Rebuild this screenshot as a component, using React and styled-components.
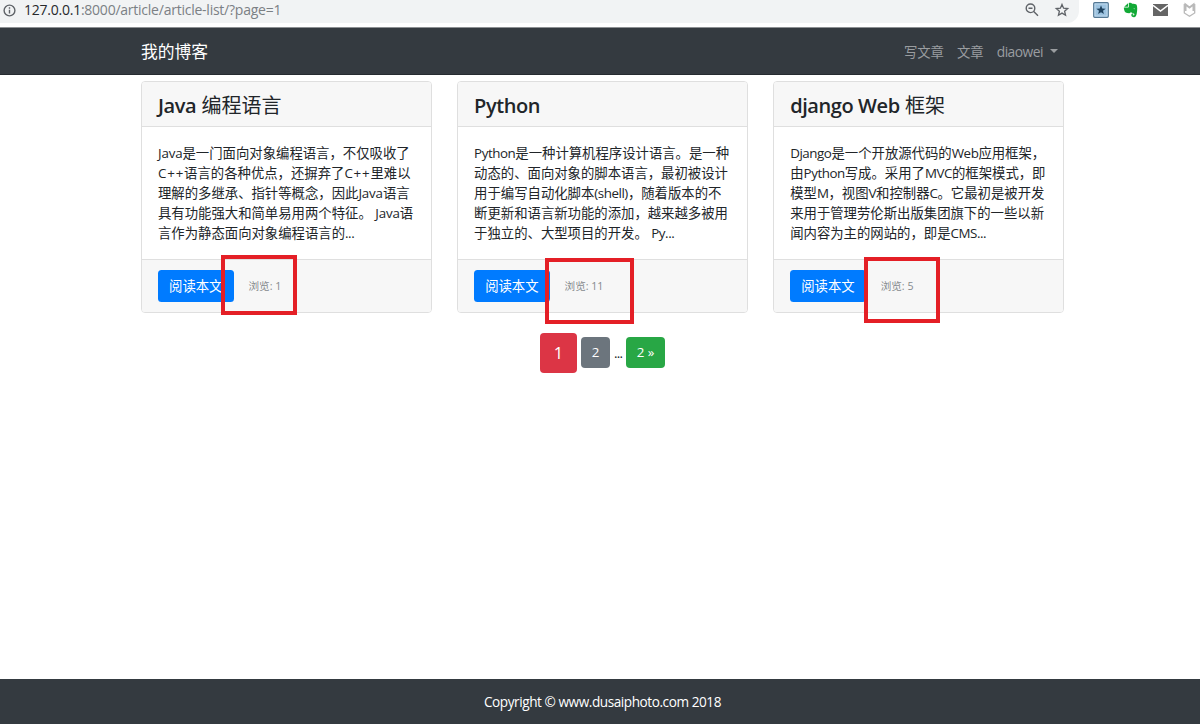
import React from "react";
import styled, { createGlobalStyle } from "styled-components";

const GlobalStyle = createGlobalStyle`
  *, *::before, *::after { box-sizing: border-box; }
  body {
    margin: 0;
    background: #fff;
    color: #212529;
    font-family: "Open Sans", "Noto Sans CJK SC", sans-serif;
    font-size: 13.36px;
    line-height: 20px;
    overflow: hidden;
  }
  h4, p { margin: 0; }
`;

const Page = styled.div`
  height: 724px;
  display: flex;
  flex-direction: column;
`;

const BrowserBar = styled.div`
  height: 28px;
  flex: none;
  display: flex;
  align-items: flex-start;
  border-bottom: 1px solid #8d9093;
`;

const AddressBar = styled.div`
  width: 1079px;
  height: 23px;
  padding: 0 9px 3px 2px;
  display: flex;
  align-items: center;
  background: #f1f3f4;
  border-radius: 0 0 12px 0;
  svg { display: block; flex: none; }
`;

const Url = styled.div`
  flex: 1;
  padding-left: 7px;
  font-size: 14px;
  letter-spacing: -0.24px;
  color: #7b8084;
  white-space: nowrap;
  b { font-weight: 400; color: #27292c; }
`;

const AddressIcons = styled.div`
  display: flex;
  gap: 14px;
`;

const Extensions = styled.div`
  display: flex;
  align-items: center;
  gap: 14px;
  height: 20px;
  padding-left: 14px;
  svg { display: block; flex: none; }
`;

const Navbar = styled.nav`
  height: 47px;
  flex: none;
  padding: 1px 142px 0 141px;
  display: flex;
  align-items: center;
  justify-content: space-between;
  background: #343a40;
  border-bottom: 1px solid #262b30;
`;

const Brand = styled.div`
  font-size: 16.8px;
  line-height: 24px;
  color: #fff;
`;

const NavLinks = styled.div`
  display: flex;
  align-items: center;
  gap: 13px;
  color: #9a9da0;
`;

const UserMenu = styled.div`
  display: flex;
  align-items: center;
  gap: 7px;
  font-size: 13.8px;
  &::after {
    content: "";
    border: 4px solid transparent;
    border-top-color: currentColor;
    border-bottom: 0;
    margin-bottom: 2px;
  }
`;

const LatinRun = styled.span`
  letter-spacing: ${(p) => p.$track}px;
`;

const Main = styled.main`
  flex: 1;
  padding: 6px 136px 0 141px;
`;

const Cards = styled.div`
  display: grid;
  grid-template-columns: repeat(3, 291px);
  column-gap: 25.1px;
`;

const Card = styled.article`
  position: relative;
  height: 232px;
  display: flex;
  flex-direction: column;
  border: 1px solid #dfdfdf;
  border-radius: 4px;
  background: #fff;
`;

const CardHeader = styled.h4`
  height: 45px;
  padding: 0 16px;
  font-size: 20px;
  font-weight: 400;
  line-height: 47px;
  white-space: nowrap;
  background: #f7f7f7;
  border-bottom: 1px solid #dfdfdf;
  border-radius: 3px 3px 0 0;
  ${LatinRun} { font-weight: 600; }
`;

const CardBody = styled.p`
  flex: 1;
  padding: 16px 16px 0;
  white-space: nowrap;
`;

const Line = styled.span`
  display: block;
`;

const CardFooter = styled.div`
  height: 53px;
  padding: 0 16px;
  display: flex;
  align-items: center;
  gap: 15px;
  background: #f7f7f7;
  border-top: 1px solid #dfdfdf;
  border-radius: 0 0 3px 3px;
`;

const ReadButton = styled.button`
  width: 75.5px;
  height: 32px;
  padding: 0;
  border: 0;
  border-radius: 3.5px;
  background: #007bff;
  color: #fff;
  font: inherit;
`;

const Views = styled.small`
  font-size: 10.6px;
  color: #868a8e;
`;

const Highlight = styled.div`
  position: absolute;
  left: ${(p) => p.$x}px;
  top: ${(p) => p.$y}px;
  width: ${(p) => p.$w}px;
  height: ${(p) => p.$h}px;
  border: 4px solid #e41f26;
`;

const Pagination = styled.div`
  margin: 20px 0 0 399px;
  display: flex;
  align-items: center;
  gap: 4px;
`;

const PageButton = styled.button`
  width: ${(p) => p.$w}px;
  height: ${(p) => (p.$large ? 40 : 31)}px;
  margin-bottom: ${(p) => (p.$large ? 0 : 1)}px;
  padding: 0 0 1px;
  border: 0;
  border-radius: 4px;
  background: ${(p) => p.$color};
  color: #fff;
  font-family: inherit;
  font-size: ${(p) => (p.$large ? 16.6 : 13.33)}px;
`;

const Ellipsis = styled.span`
  width: 8px;
  letter-spacing: -0.7px;
`;

const Footer = styled.footer`
  height: 45px;
  flex: none;
  padding: 1px 0 0 5px;
  display: flex;
  align-items: center;
  justify-content: center;
  background: #343a40;
  color: #fff;
  font-size: 13.6px;
`;

const wideRuns = { "C++": 0.8, Java: -0.15 };

function Mixed({ text, track }) {
  return text.split(/([\x21-\x7e©]+(?: [\x21-\x7e©]+)*)/).map((part, i) =>
    i % 2 ? (
      <LatinRun key={i} $track={track ?? wideRuns[part] ?? -0.45}>{part}</LatinRun>
    ) : part
  );
}

const articles = [
  {
    title: "Java 编程语言",
    lines: [
      "Java是一门面向对象编程语言，不仅吸收了",
      "C++语言的各种优点，还摒弃了C++里难以",
      "理解的多继承、指针等概念，因此Java语言",
      "具有功能强大和简单易用两个特征。 Java语",
      "言作为静态面向对象编程语言的...",
    ],
    views: "浏览: 1",
    box: { $x: 79, $y: 173, $w: 76, $h: 60 },
  },
  {
    title: "Python",
    lines: [
      "Python是一种计算机程序设计语言。是一种",
      "动态的、面向对象的脚本语言，最初被设计",
      "用于编写自动化脚本(shell)，随着版本的不",
      "断更新和语言新功能的添加，越来越多被用",
      "于独立的、大型项目的开发。 Py...",
    ],
    views: "浏览: 11",
    box: { $x: 87, $y: 176, $w: 89, $h: 66 },
  },
  {
    title: "django Web 框架",
    lines: [
      "Django是一个开放源代码的Web应用框架，",
      "由Python写成。采用了MVC的框架模式，即",
      "模型M，视图V和控制器C。它最初是被开发",
      "来用于管理劳伦斯出版集团旗下的一些以新",
      "闻内容为主的网站的，即是CMS...",
    ],
    views: "浏览: 5",
    box: { $x: 90, $y: 175, $w: 76, $h: 66 },
  },
];

const InfoIcon = () => (
  <svg width="15" height="15" viewBox="0 0 15 15" fill="none" stroke="#5f6368" strokeWidth="1.4">
    <circle cx="7.5" cy="7.5" r="5.4" />
    <path d="M7.5 6.8v3.6M7.5 4.3v1.4" />
  </svg>
);

const ZoomOutIcon = () => (
  <svg width="16" height="16" viewBox="0 0 16 16" fill="none" stroke="#5f6368" strokeWidth="1.4">
    <circle cx="6.5" cy="6.3" r="4.3" />
    <path d="M4.5 6.3h4M9.7 9.5l4.3 4.3" />
  </svg>
);

const StarIcon = () => (
  <svg width="16" height="16" viewBox="0 0 16 16" fill="none" stroke="#5f6368" strokeWidth="1.3">
    <path d="M8 2.4l1.6 3.8 4.1.35-3.1 2.7.95 4L8 11.1l-3.55 2.15.95-4-3.1-2.7 4.1-.35z" />
  </svg>
);

const BookmarkExtension = () => (
  <svg width="16" height="16" viewBox="0 0 16 16">
    <rect x=".7" y=".7" width="14.6" height="14.6" rx="1" fill="#9dc3e0" stroke="#557893" strokeWidth="1.2" />
    <rect x="2" y="2" width="12" height="12" fill="none" stroke="#c5dded" strokeWidth=".8" />
    <path d="M8 3.3l1.25 3.2 3.4.2-2.65 2.1.9 3.3L8 10.3l-2.9 1.8.9-3.3-2.65-2.1 3.4-.2z" fill="#20435f" />
  </svg>
);

const ElephantExtension = () => (
  <svg width="16" height="16" viewBox="0 0 16 16" fill="#12a936">
    <path d="M5 1.2L1.2 4.8h3.3q.5 0 .5-.5z" />
    <path d="M5.8 1c1.5-.5 2.7-.2 3.3.7 1.7 0 3.8.2 4.5 1 .8 2 .8 5.3.2 8.5-.3 2.3-1.1 4-2.8 4-1.8 0-2.7-.8-2.7-2.2 0-1.2.8-1.9 2-1.8v1.2c-.6 0-.8.3-.7.7.2.5 1.8.4 1.8-.6 0-1.3-1.2-1.6-2.7-1.8-.4 0-.6-.5-.8-.9-.2 1-.7 1.4-1.7 1.4C3 11.2 1.7 10.5 1.2 8 .9 6.8.8 6 .9 5.4h4c.7 0 .9-.4.9-1z" />
    <path d="M10.4 6.8c.8-.5 1.6-.2 1.7.5z" fill="#fff" />
  </svg>
);

const MailExtension = () => (
  <svg width="15" height="16" viewBox="0 0 15 16">
    <path d="M0 2h15v12H0z" fill="#656565" />
    <path d="M0 3.3L7.5 9L15 3.3" fill="none" stroke="#fff" strokeWidth="1.5" />
  </svg>
);

const ShieldExtension = () => (
  <svg width="15" height="16" viewBox="0 0 15 16" fill="none" stroke="#b9b9b9">
    <path d="M3.5 9V2.5L7.5 5.5l4-3V9" strokeWidth="2" />
    <path d="M2.300 2v9l5.200 3.200 5.200-3.200V2" strokeWidth="1.300" />
  </svg>
);

export default function App() {
  return (
    <Page>
      <GlobalStyle />
      <BrowserBar>
        <AddressBar>
          <InfoIcon />
          <Url><b>127.0.0.1</b>:8000/article/article-list/?page=1</Url>
          <AddressIcons>
            <ZoomOutIcon />
            <StarIcon />
          </AddressIcons>
        </AddressBar>
        <Extensions>
          <BookmarkExtension />
          <ElephantExtension />
          <MailExtension />
          <ShieldExtension />
        </Extensions>
      </BrowserBar>
      <Navbar>
        <Brand>我的博客</Brand>
        <NavLinks>
          <span>写文章</span>
          <span>文章</span>
          <UserMenu><Mixed text="diaowei" track={-0.5} /></UserMenu>
        </NavLinks>
      </Navbar>
      <Main>
        <Cards>
          {articles.map((a) => (
            <Card key={a.title}>
              <CardHeader><Mixed text={a.title} track={-0.42} /></CardHeader>
              <CardBody>
                {a.lines.map((line) => (
                  <Line key={line}><Mixed text={line} /></Line>
                ))}
              </CardBody>
              <CardFooter>
                <ReadButton>阅读本文</ReadButton>
                <Views>{a.views}</Views>
              </CardFooter>
              <Highlight {...a.box} />
            </Card>
          ))}
        </Cards>
        <Pagination>
          <PageButton $w={37} $large $color="#dc3545">1</PageButton>
          <PageButton $w={29} $color="#6c757d">2</PageButton>
          <Ellipsis>...</Ellipsis>
          <PageButton $w={39} $color="#28a745">2 »</PageButton>
        </Pagination>
      </Main>
      <Footer><Mixed text="Copyright © www.dusaiphoto.com 2018" track={-0.44} /></Footer>
    </Page>
  );
}
